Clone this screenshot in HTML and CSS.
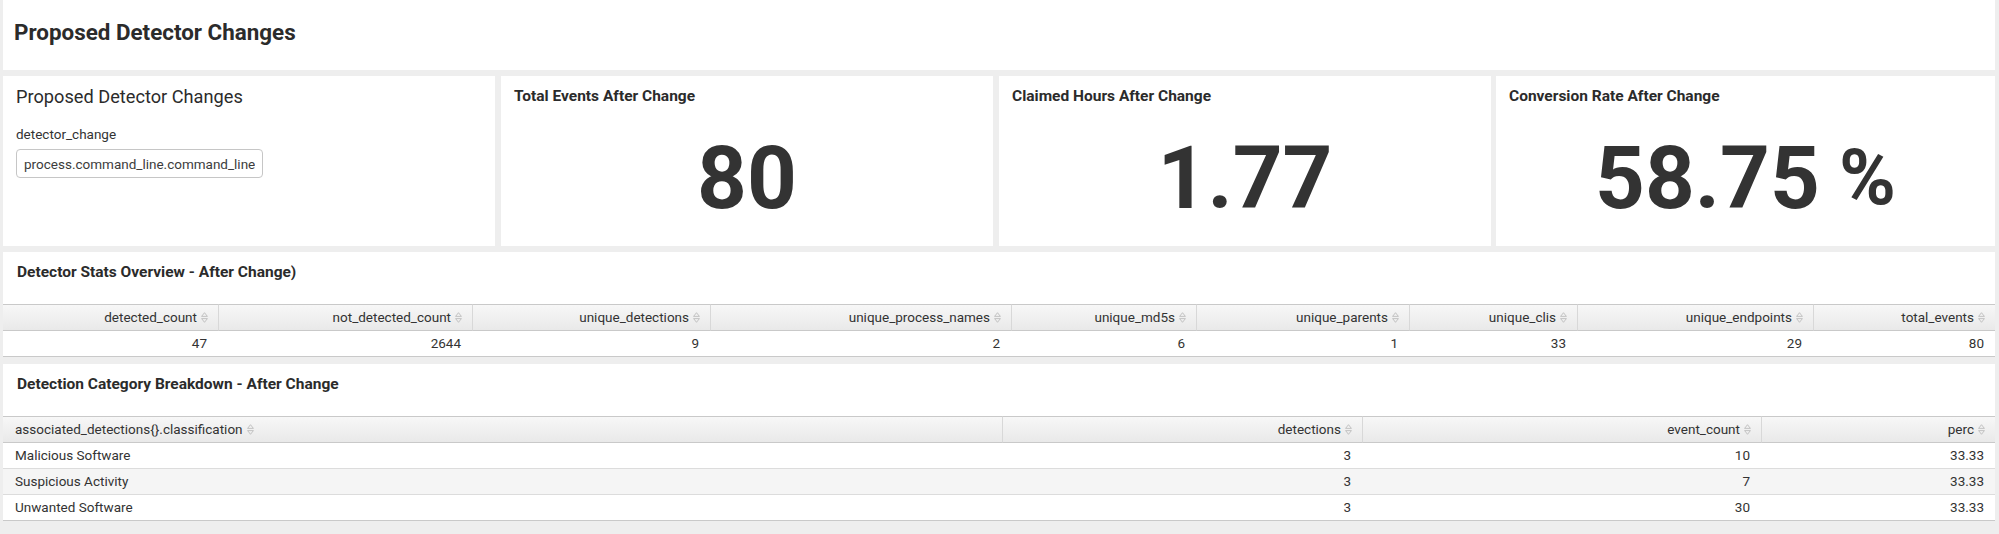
FILE: index.html
```html
<!DOCTYPE html>
<html lang="en">
  <head>
    <meta charset="UTF-8" />
    <meta name="viewport" content="width=device-width, initial-scale=1.0" />
    <title>Proposed Detector Changes</title>
    <link rel="stylesheet" href="styles.css">
  </head>
  <body>
    <!-- shared sort glyph for the table headers -->
    <svg class="icon-defs" width="0" height="0">
      <symbol id="sort" viewBox="0 0 7 11">
        <path d="M0.6 4.4 L3.5 0.7 L6.4 4.4 Z M0.6 6.6 L3.5 10.3 L6.4 6.6 Z" fill="none" stroke="#bdbdbd" stroke-width="0.9" stroke-linejoin="round" />
      </symbol>
    </svg>

    <div class="dashboard">
      <!-- Dashboard title -->
      <div class="dash-header">
        <h1>Proposed Detector Changes</h1>
      </div>

      <!-- Input + single values -->
      <div class="row">
        <div class="panel input-panel">
          <h2 class="fieldset-title">Proposed Detector Changes</h2>
          <label for="detector_change">detector_change</label>
          <input type="text" id="detector_change" name="detector_change" value="process.command_line.command_line" />
        </div>

        <div class="panel single">
          <h3 class="panel-title">Total Events After Change</h3>
          <div class="single-value">80</div>
        </div>

        <div class="panel single">
          <h3 class="panel-title">Claimed Hours After Change</h3>
          <div class="single-value">1.77</div>
        </div>

        <div class="panel single">
          <h3 class="panel-title">Conversion Rate After Change</h3>
          <div class="single-value">58.75<span class="unit"> %</span></div>
        </div>
      </div>

      <!-- Stats table -->
      <div class="panel table-panel">
        <h3 class="panel-title">Detector Stats Overview - After Change)</h3>
        <table class="results stats-table">
          <colgroup>
            <col><col><col><col><col><col><col><col><col>
          </colgroup>
          <thead>
            <tr>
              <th>detected_count<svg class="sort-icon"><use href="#sort" /></svg></th>
              <th>not_detected_count<svg class="sort-icon"><use href="#sort" /></svg></th>
              <th>unique_detections<svg class="sort-icon"><use href="#sort" /></svg></th>
              <th>unique_process_names<svg class="sort-icon"><use href="#sort" /></svg></th>
              <th>unique_md5s<svg class="sort-icon"><use href="#sort" /></svg></th>
              <th>unique_parents<svg class="sort-icon"><use href="#sort" /></svg></th>
              <th>unique_clis<svg class="sort-icon"><use href="#sort" /></svg></th>
              <th>unique_endpoints<svg class="sort-icon"><use href="#sort" /></svg></th>
              <th>total_events<svg class="sort-icon"><use href="#sort" /></svg></th>
            </tr>
          </thead>
          <tbody>
            <tr>
              <td>47</td>
              <td>2644</td>
              <td>9</td>
              <td>2</td>
              <td>6</td>
              <td>1</td>
              <td>33</td>
              <td>29</td>
              <td>80</td>
            </tr>
          </tbody>
        </table>
      </div>

      <!-- Category table -->
      <div class="panel table-panel">
        <h3 class="panel-title">Detection Category Breakdown - After Change</h3>
        <table class="results category-table">
          <colgroup>
            <col><col><col><col>
          </colgroup>
          <thead>
            <tr>
              <th class="text-col">associated_detections{}.classification<svg class="sort-icon"><use href="#sort" /></svg></th>
              <th>detections<svg class="sort-icon"><use href="#sort" /></svg></th>
              <th>event_count<svg class="sort-icon"><use href="#sort" /></svg></th>
              <th>perc<svg class="sort-icon"><use href="#sort" /></svg></th>
            </tr>
          </thead>
          <tbody>
            <tr>
              <td class="text-col">Malicious Software</td>
              <td>3</td>
              <td>10</td>
              <td>33.33</td>
            </tr>
            <tr>
              <td class="text-col">Suspicious Activity</td>
              <td>3</td>
              <td>7</td>
              <td>33.33</td>
            </tr>
            <tr>
              <td class="text-col">Unwanted Software</td>
              <td>3</td>
              <td>30</td>
              <td>33.33</td>
            </tr>
          </tbody>
        </table>
      </div>
    </div>
  </body>
</html>
```

FILE: styles.css
```css
* {
  box-sizing: border-box;
}

body {
  margin: 0;
  background-color: #eeeeee;
  font-family: Roboto, "Helvetica Neue", Arial, sans-serif;
  color: #333;
}

.icon-defs {
  display: block;
  overflow: hidden;
}

.dashboard {
  display: flex;
  flex-direction: column;
  gap: 6px;
  padding: 0 4px 0 3px;
}

/* Dashboard title bar */
.dash-header {
  background-color: white;
  height: 70px;
  padding: 19px 11px 0;
}

.dash-header h1 {
  margin: 0;
  font-size: 22.4px;
  line-height: 26px;
  font-weight: 700;
  color: #2b2b2b;
}

/* Panels */
.panel {
  background-color: white;
}

.row {
  display: flex;
  gap: 6px;
  height: 170px;
}

.row .panel {
  flex: 0 0 492px;
  padding: 10px 12px;
}

.row .panel:last-child {
  flex: 1 1 0;
  margin-left: -1px;
}

.panel-title {
  margin: 0;
  font-size: 15.5px;
  line-height: 20px;
  font-weight: 700;
  color: #2b2b2b;
}

/* Input panel */
.row .input-panel {
  padding-left: 13px;
}

.fieldset-title {
  margin: 0;
  font-size: 18.2px;
  line-height: 22px;
  font-weight: 400;
  color: #2b2b2b;
}

.input-panel label {
  display: block;
  margin-top: 17px;
  font-size: 13.5px;
  line-height: 18px;
  color: #333;
}

.input-panel input {
  display: block;
  margin-top: 6px;
  width: 247px;
  height: 29px;
  padding: 0 7px;
  border: 1px solid #c6c6c6;
  border-radius: 4px;
  font-family: Roboto, Arial, sans-serif;
  font-size: 13.5px;
  color: #3c3c3c;
  background-color: white;
}

/* Single values */
.single .panel-title {
  padding-left: 1px;
}

.single-value {
  margin-top: 29px;
  text-align: center;
  font-size: 87px;
  line-height: 87px;
  font-weight: 700;
  color: #333;
}

.single-value .unit {
  font-size: 77px;
  vertical-align: 4px;
}

/* Table panels */
.table-panel {
  padding-top: 10px;
}

.table-panel .panel-title {
  padding: 0 14px;
  margin-bottom: 22px;
}

.table-panel + .table-panel {
  margin-top: 1px;
}

.results {
  width: 100%;
  table-layout: fixed;
  border-collapse: separate;
  border-spacing: 0;
  font-size: 13.5px;
  color: #333;
}

.results th {
  font-weight: 400;
  text-align: right;
  white-space: nowrap;
  padding: 4px 10px 4px 12px;
  line-height: 17px;
  background: linear-gradient(#f7f7f7, #e9e9e9);
  border-top: 1px solid #c9c9c9;
  border-bottom: 1px solid #c9c9c9;
  border-left: 1px solid #d8d8d8;
}

.results th:first-child {
  border-left: none;
}

.results td {
  text-align: right;
  white-space: nowrap;
  padding: 4px 11px 4px 12px;
  line-height: 17px;
  border-bottom: 1px solid #dcdcdc;
}

.results tbody tr:nth-child(even) td {
  background-color: #f5f5f5;
}

.results tbody tr:last-child td {
  border-bottom-color: #c9c9c9;
}

.results .text-col {
  text-align: left;
}

.sort-icon {
  display: inline-block;
  width: 7px;
  height: 11px;
  margin-left: 4px;
  vertical-align: -1px;
}

/* column widths */
.stats-table col:nth-child(1) { width: 215px; }
.stats-table col:nth-child(2) { width: 254px; }
.stats-table col:nth-child(3) { width: 238px; }
.stats-table col:nth-child(4) { width: 301px; }
.stats-table col:nth-child(5) { width: 185px; }
.stats-table col:nth-child(6) { width: 213px; }
.stats-table col:nth-child(7) { width: 168px; }
.stats-table col:nth-child(8) { width: 236px; }
.stats-table col:nth-child(9) { width: 182px; }

.category-table col:nth-child(1) { width: 999px; }
.category-table col:nth-child(2) { width: 360px; }
.category-table col:nth-child(3) { width: 399px; }
.category-table col:nth-child(4) { width: 234px; }
```
